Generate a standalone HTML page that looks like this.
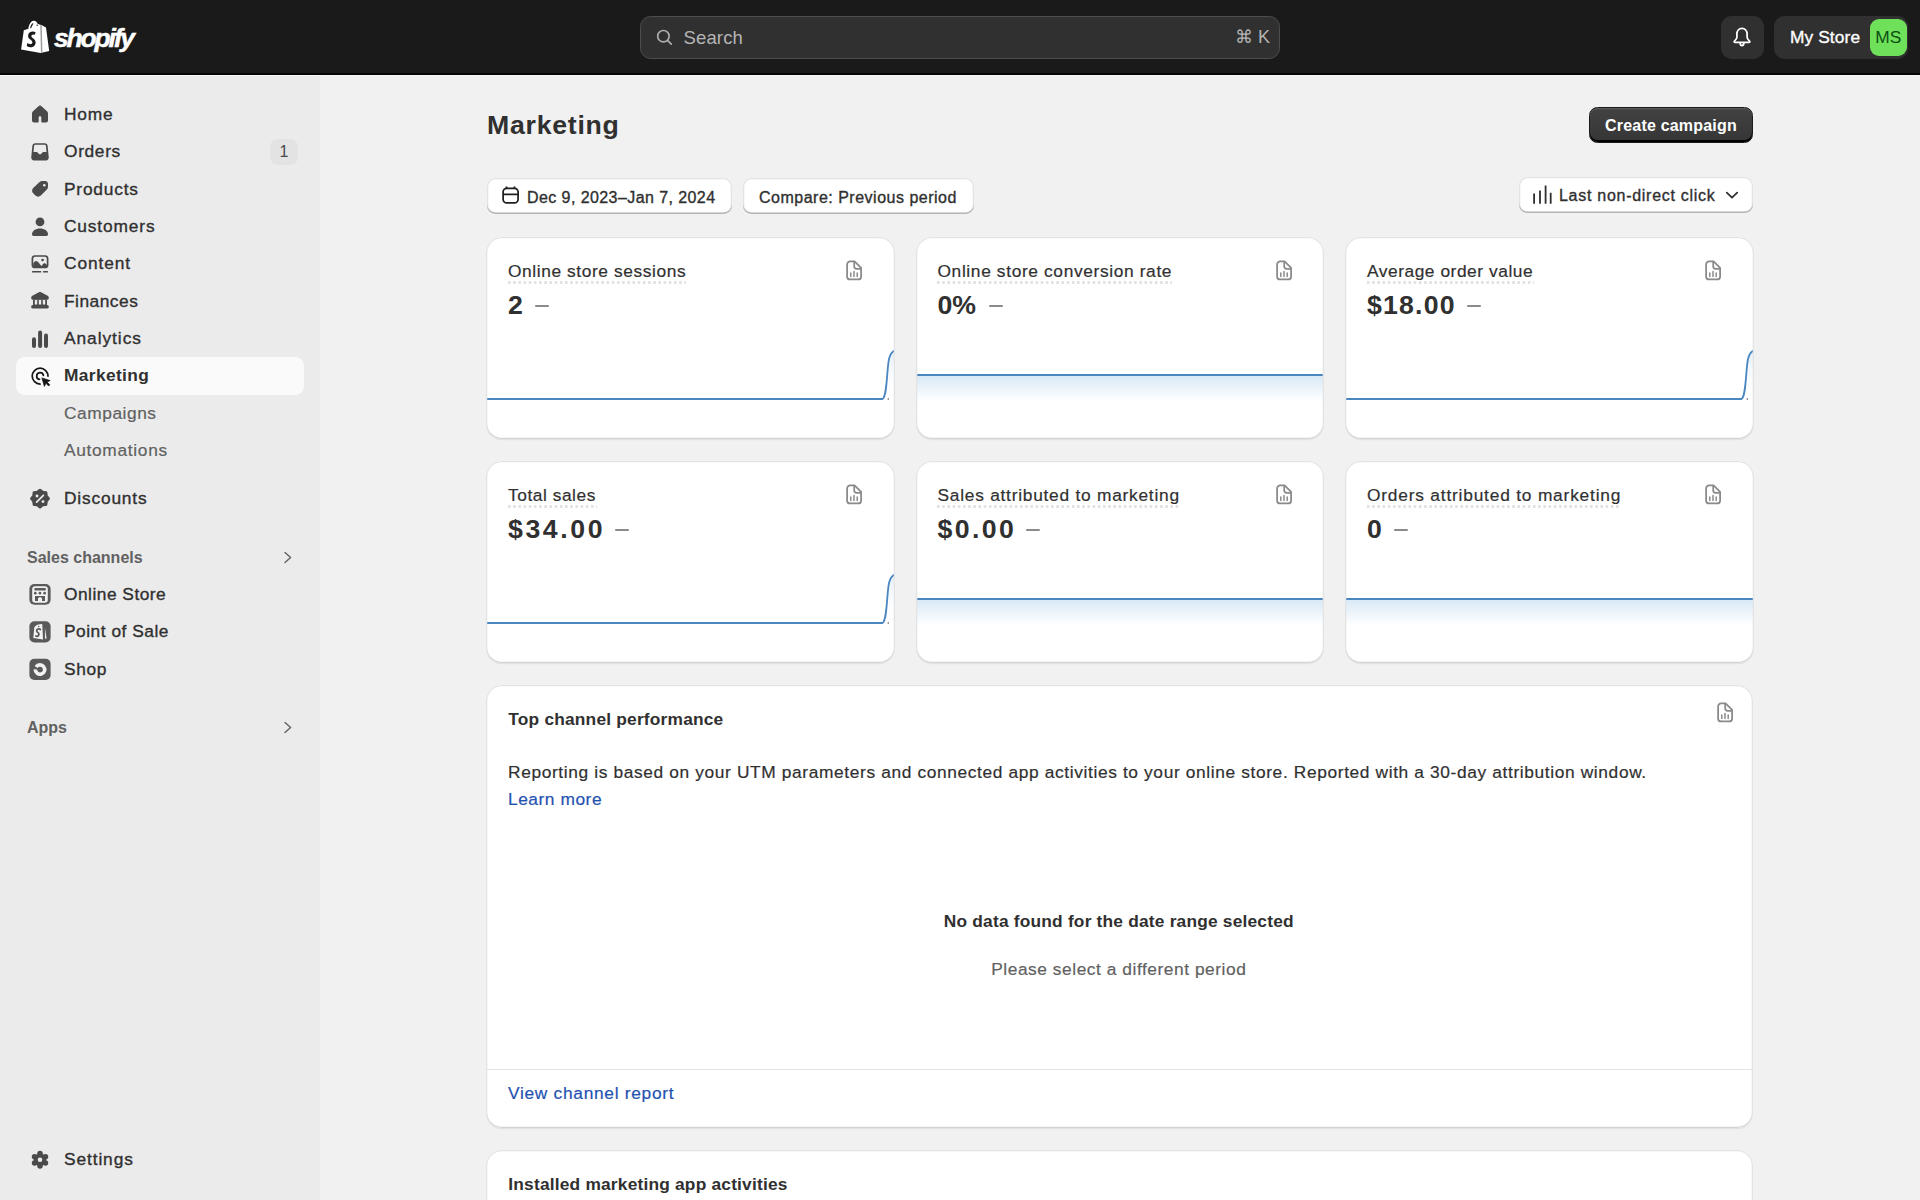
<!DOCTYPE html>
<html><head><meta charset="utf-8"><title>Marketing</title>
<style>
*{box-sizing:border-box;margin:0;padding:0}
html,body{width:1920px;height:1200px;overflow:hidden}
body{font-family:"Liberation Sans",sans-serif;background:#f1f1f1;color:#303030;position:relative;font-size:17.33px;-webkit-font-smoothing:antialiased}
.abs{position:absolute}
.t{position:absolute;white-space:nowrap;line-height:20px}
.r13{font-size:17.33px;letter-spacing:0.55px;-webkit-text-stroke:0.2px currentColor}
.m13{font-size:17.33px;letter-spacing:0.6px;-webkit-text-stroke:0.35px currentColor}
.b13{font-size:17.33px;font-weight:bold;letter-spacing:0.2px}
.m12{font-size:16px;letter-spacing:0.1px;-webkit-text-stroke:0.35px currentColor}
.card{position:absolute;background:#fff;border-radius:16px;overflow:hidden;box-shadow:0 1.3px 0 rgba(26,26,26,0.07)}
.card::after{content:"";position:absolute;inset:0;border-radius:16px;box-shadow:inset 0 -1.3px 0 #d4d4d4, inset 1.3px 0 0 #e3e3e3, inset -1.3px 0 0 #e3e3e3, inset 0 1.3px 0 #e3e3e3;pointer-events:none}
.btn{position:absolute;background:#fff;border-radius:8.5px;box-shadow:inset 0 -1.5px 0 #b5b5b5, inset 0 0 0 1.3px #e3e3e3}
.ul{position:absolute;height:2.5px;background-image:linear-gradient(90deg,#e2e2e2 50%,transparent 50%);background-size:5.2px 2.5px}
</style></head><body>
<div class="abs" style="left:0;top:0;width:1920px;height:75px;background:#1a1a1a;border-bottom:2px solid #060606"></div>
<div class="abs" style="left:0;top:75px;width:320px;height:1125px;background:#ebebeb"></div>
<div class="abs" style="left:0;top:75px;width:1920px;height:1px;background:#f8f8f8"></div>
<div class="abs" style="left:16px;top:357px;width:288.2px;height:38px;background:#fafafa;border-radius:8.5px"></div>
<div class="t m13" style="left:64px;top:104px;letter-spacing:0.77px">Home</div>
<div class="t m13" style="left:64px;top:141.3px;letter-spacing:0.66px">Orders</div>
<div class="t m13" style="left:64px;top:178.7px;letter-spacing:0.79px">Products</div>
<div class="t m13" style="left:64px;top:216px;letter-spacing:0.85px">Customers</div>
<div class="t m13" style="left:64px;top:253.3px;letter-spacing:0.90px">Content</div>
<div class="t m13" style="left:64px;top:290.7px;letter-spacing:0.50px">Finances</div>
<div class="t m13" style="left:64px;top:328px;letter-spacing:0.95px">Analytics</div>
<div class="t m13" style="left:64px;top:488px;letter-spacing:0.81px">Discounts</div>
<div class="t m13" style="left:64px;top:584px;letter-spacing:0.49px">Online Store</div>
<div class="t m13" style="left:64px;top:621.3px;letter-spacing:0.52px">Point of Sale</div>
<div class="t m13" style="left:64px;top:658.7px;letter-spacing:0.68px">Shop</div>
<div class="t m13" style="left:64px;top:1149px;letter-spacing:0.89px">Settings</div>
<div class="t b13" style="left:64px;top:365.3px;color:#303030;letter-spacing:0.36px">Marketing</div>
<div class="t r13" style="left:64px;top:402.7px;color:#616161;letter-spacing:0.54px">Campaigns</div>
<div class="t r13" style="left:64px;top:440px;color:#616161;letter-spacing:0.68px">Automations</div>
<div class="abs" style="left:270px;top:139px;width:28px;height:26px;background:#e3e3e3;border-radius:8px;font-size:16px;line-height:26px;text-align:center;color:#4a4a4a">1</div>
<div class="t" style="left:27px;top:547.5px;color:#616161;font-weight:bold;font-size:16px;letter-spacing:0px">Sales channels</div>
<div class="t" style="left:27px;top:717.5px;color:#616161;font-weight:bold;font-size:16px">Apps</div>
<svg class="abs" style="left:0;top:0" width="320" height="1200" viewBox="0 0 320 1200"><path fill="#4a4a4a" d="M40 105.6 C40.6 105.6 41.1 105.8 41.5 106.2 L47 111.2 C47.6 111.8 48 112.5 48 113.4 V120.4 C48 121.5 47.1 122.4 46 122.4 H42 C41.5 122.4 41.3 122 41.3 121.5 V117.6 C41.3 116.9 40.9 116.3 40.3 116.3 H39.7 C39.1 116.3 38.7 116.9 38.7 117.6 V121.5 C38.7 122 38.5 122.4 38 122.4 H34 C32.9 122.4 32 121.5 32 120.4 V113.4 C32 112.5 32.4 111.8 33 111.2 L38.5 106.2 C38.9 105.8 39.4 105.6 40 105.6 Z"/><path fill="#4a4a4a" fill-rule="evenodd" d="M35.2 143.2 H44.8 C46.4 143.2 47.4 144.2 47.6 145.6 L48.75 157.3 C48.9 159 47.7 160.5 46 160.5 H34 C32.3 160.5 31.1 159 31.25 157.3 L32.4 145.6 C32.6 144.2 33.6 143.2 35.2 143.2 Z M35.4 144.8 C34.7 144.8 34.2 145.2 34.1 145.9 L33.5 152.1 H36.7 C37.1 152.1 37.4 152.3 37.6 152.6 L38.6 153.7 C39.3 154.5 40.7 154.5 41.4 153.7 L42.4 152.6 C42.6 152.3 42.9 152.1 43.3 152.1 H46.5 L45.9 145.9 C45.8 145.2 45.3 144.8 44.6 144.8 Z"/><path fill="#4a4a4a" d="M42.2 181 H45.2 C46.8 181 48 182.2 48 183.8 V186.8 C48 187.8 47.6 188.7 46.9 189.4 L40.8 195.5 C39.3 197 36.9 197 35.4 195.5 L33.2 193.3 C31.7 191.8 31.7 189.4 33.2 187.9 L39.6 182.1 C40.3 181.4 41.2 181 42.2 181 Z"/><circle cx="44.3" cy="185.2" r="1.3" fill="#ebebeb"/><circle cx="40" cy="221.9" r="4.4" fill="#4a4a4a"/><path fill="#4a4a4a" d="M32 234.2 C32 230.8 35.6 228.4 40 228.4 C44.4 228.4 48 230.8 48 234.2 C48 235.2 47.3 235.9 46.3 235.9 H33.7 C32.7 235.9 32 235.2 32 234.2 Z"/><rect x="32.4" y="256" width="15.2" height="11.5" rx="2.6" fill="none" stroke="#4a4a4a" stroke-width="1.7"/><path fill="#4a4a4a" d="M33.2 263.6 C34 262.1 35 261 36.1 261 C37.1 261 37.9 261.7 38.7 262.8 L41 265.5 C41.3 265.9 41.8 265.9 42.1 265.5 C42.8 264.3 43.4 263.3 44.3 263.3 C45.3 263.3 46.1 264 46.9 264.8 V267.3 H33.2 Z"/><circle cx="42.6" cy="260" r="1.35" fill="#4a4a4a"/><rect x="32" y="270.9" width="9.3" height="1.6" rx="0.6" fill="#4a4a4a"/><rect x="43" y="270.9" width="5" height="1.6" rx="0.6" fill="#4a4a4a"/><path fill="#4a4a4a" d="M40 292 C40.4 292 40.8 292.1 41.1 292.3 L47.7 295.8 C48.4 296.2 48.8 296.9 48.8 297.7 V298 C48.8 298.9 48.1 299.7 47.2 299.7 H32.8 C31.9 299.7 31.2 298.9 31.2 298 V297.7 C31.2 296.9 31.6 296.2 32.3 295.8 L38.9 292.3 C39.2 292.1 39.6 292 40 292 Z"/><path fill="#4a4a4a" fill-rule="evenodd" d="M33 299.4 H47 V305.3 H33 Z M34.8 299.9 V304.6 H37.2 V299.9 Z M38.8 299.9 V304.6 H41.2 V299.9 Z M42.8 299.9 V304.6 H45.2 V299.9 Z"/><rect x="31.2" y="305" width="17.6" height="3.6" rx="1.6" fill="#4a4a4a"/><rect x="32" y="337.3" width="4" height="10.6" rx="2" fill="#4a4a4a"/><rect x="38.1" y="330.6" width="4" height="17.3" rx="2" fill="#4a4a4a"/><rect x="44" y="333.4" width="4" height="14.5" rx="2" fill="#4a4a4a"/><path d="M48 376.1 A7.9 7.9 0 1 0 40.1 384" fill="none" stroke="#161616" stroke-width="1.75" stroke-linecap="round"/><path d="M43.4 375.3 A3.4 3.4 0 1 0 39.5 379.4" fill="none" stroke="#161616" stroke-width="1.75" stroke-linecap="round"/><path d="M41.9 377.9 L50.2 380.6 L47.1 382.1 L49.8 384.8 L48.6 386 L45.9 383.3 L44.4 386.4 Z" fill="#161616" stroke="#161616" stroke-width="0.7" stroke-linejoin="round"/><path fill="#4a4a4a" stroke="#4a4a4a" stroke-width="2.6" stroke-linejoin="round" d="M40.00 490.00 L42.68 492.13 L46.08 492.52 L46.47 495.92 L48.60 498.60 L46.47 501.28 L46.08 504.68 L42.68 505.07 L40.00 507.20 L37.32 505.07 L33.92 504.68 L33.53 501.28 L31.40 498.60 L33.53 495.92 L33.92 492.52 L37.32 492.13 Z"/><circle cx="37" cy="496" r="1.45" fill="#ebebeb"/><circle cx="43" cy="501.6" r="1.45" fill="#ebebeb"/><path d="M36.6 502.2 L43.4 495.4" stroke="#ebebeb" stroke-width="1.7" stroke-linecap="round"/><rect x="29.4" y="584" width="21.2" height="20.75" rx="5" fill="#5a5a5a"/><rect x="32.2" y="586.3" width="15.6" height="16.5" rx="3" fill="#f2f2f2"/><rect x="34.4" y="588.1" width="11.4" height="2.4" rx="0.6" fill="#5a5a5a"/><ellipse cx="35.3" cy="593.2" rx="1.35" ry="1.35" fill="#5a5a5a"/><ellipse cx="39.95" cy="593.2" rx="1.35" ry="1.35" fill="#5a5a5a"/><ellipse cx="44.6" cy="593.2" rx="1.35" ry="1.35" fill="#5a5a5a"/><path fill="#5a5a5a" fill-rule="evenodd" d="M35 596.1 H45 V600.9 H35 Z M38 600.9 V598.9 C38 597.9 38.9 597.2 40 597.2 C41.1 597.2 42 597.9 42 598.9 V600.9 Z"/><rect x="29.4" y="621.3" width="21.2" height="21.2" rx="5" fill="#5a5a5a"/><path d="M34.2 628.3 C34.6 626 37.5 624.3 41.3 624.1 L42.3 624.3 L43 639.6 L33.3 637.9 Z" fill="#f2f2f2"/><path d="M44.9 627.8 L46.6 638.6 L45 638.8 Z" fill="#f2f2f2"/><circle cx="38.7" cy="626.4" r="0.75" fill="#5a5a5a"/><path d="M40.4 629.5 C39.6 628.8 38.3 628.7 37.4 629.3 C36.3 630.1 36.5 631.4 37.6 632.2 C38.9 633.1 39.3 634.3 38.5 635.4 C37.8 636.3 36.6 636.4 35.9 636" stroke="#5a5a5a" stroke-width="1.75" fill="none" stroke-linecap="round"/><rect x="29.4" y="658.8" width="21.2" height="21.2" rx="5" fill="#5a5a5a"/><path d="M36.1 666.9 A4.7 4.7 0 1 1 35.3 669.4" stroke="#f2f2f2" stroke-width="3.6" fill="none" stroke-linecap="butt"/><circle cx="40" cy="1159.8" r="6.4" fill="#4a4a4a"/><circle cx="40.00" cy="1166.10" r="2.75" fill="#4a4a4a"/><circle cx="34.54" cy="1162.95" r="2.75" fill="#4a4a4a"/><circle cx="34.54" cy="1156.65" r="2.75" fill="#4a4a4a"/><circle cx="40.00" cy="1153.50" r="2.75" fill="#4a4a4a"/><circle cx="45.46" cy="1156.65" r="2.75" fill="#4a4a4a"/><circle cx="45.46" cy="1162.95" r="2.75" fill="#4a4a4a"/><circle cx="40" cy="1159.8" r="2.3" fill="#ebebeb"/><path d="M285 552.6 L290.6 557.6 L285 562.6" stroke="#616161" stroke-width="1.4" fill="none" stroke-linecap="round" stroke-linejoin="round"/><path d="M285 722.6 L290.6 727.6 L285 732.6" stroke="#616161" stroke-width="1.4" fill="none" stroke-linecap="round" stroke-linejoin="round"/></svg>
<svg class="abs" style="left:0;top:0" width="60" height="60" viewBox="0 0 60 60">
 <path d="M23.8 30.2 L28.4 28.7 C28.8 25 30.8 21 33.6 20.8 C35.6 20.7 36.8 22 37.6 23.8 L40.2 24.8 L42 25.3 L46 27.6 L49.2 51 L40.6 52.9 L21.1 49.6 Z" fill="#fff"/>
 <path d="M30 28.3 C30.4 26.1 31.4 23.9 32.7 23.3 L33.7 23.8 C32.6 24.7 31.7 26.6 31.3 28 Z" fill="#1a1a1a"/>
 <circle cx="37.2" cy="25.2" r="0.75" fill="#1a1a1a"/>
 <path d="M41 25.2 L41.7 52.7" stroke="#9d9d9d" stroke-width="1.5" fill="none"/>
 <g transform="translate(26.75 31.4) scale(1.03 1.1) translate(-8.4 -12.9)"><path d="M16.9 13.6 C16 13.1 14.9 12.9 13.8 13 C11 13.2 9.4 15.2 9.7 17.5 C10.1 20.2 13.9 20.6 13.9 22.8 C13.9 23.9 12.9 24.7 11.7 24.5 C10.4 24.3 9 23.5 9 23.5 L8.4 26.2 C8.4 26.2 9.8 27.3 12 27.4 C15.2 27.5 17.2 25.3 17 22.6 C16.7 19.4 12.9 18.9 12.9 17.3 C12.9 16.5 13.6 15.7 15 15.7 C16 15.7 16.4 16 16.4 16 Z" fill="#1a1a1a"/></g>
</svg>
<div class="t" style="left:54px;top:20.8px;font-size:26.5px;line-height:34px;font-weight:bold;font-style:italic;color:#fff;letter-spacing:-2.2px;-webkit-text-stroke:0.5px #fff;transform-origin:0 0">shopify</div>
<div class="abs" style="left:640px;top:16px;width:640px;height:42.5px;background:#303030;border:1.3px solid #4d4d4d;border-radius:10.67px"></div>
<svg class="abs" style="left:654px;top:27px" width="20" height="20" viewBox="0 0 20 20"><circle cx="9.4" cy="9.2" r="5.7" stroke="#acacac" stroke-width="1.7" fill="none"/><path d="M13.5 13.4 L17.3 17.2" stroke="#acacac" stroke-width="1.7" stroke-linecap="round"/></svg>
<div class="t" style="left:683.5px;top:27.5px;font-size:18.5px;letter-spacing:0.15px;color:#b5b5b5">Search</div>
<div class="t" style="left:1235px;top:27px;font-size:18px;color:#b5b5b5">&#8984; K</div>
<div class="abs" style="left:1721px;top:16px;width:42.5px;height:42.5px;background:#303030;border-radius:10.67px"></div>
<svg class="abs" style="left:1730px;top:25px" width="24" height="24" viewBox="0 0 24 24"><path d="M12 3.4 C8.9 3.4 6.9 5.9 6.9 9 V12.3 C6.9 13.6 6.2 14.6 4.9 15.6 C3.7 16.5 4.1 17.4 5.2 17.4 H18.8 C19.9 17.4 20.3 16.5 19.1 15.6 C17.8 14.6 17.1 13.6 17.1 12.3 V9 C17.1 5.9 15.1 3.4 12 3.4 Z" stroke="#fff" stroke-width="1.75" fill="none" stroke-linejoin="round"/><path d="M10.1 17.6 C10.1 19 10.9 20.6 12 20.6 C13.1 20.6 13.9 19 13.9 17.6" stroke="#fff" stroke-width="1.75" fill="none"/></svg>
<div class="abs" style="left:1774px;top:16px;width:134px;height:42.5px;background:#303030;border-radius:10.67px"></div>
<div class="t m13" style="left:1790px;top:27px;color:#fff;letter-spacing:0.1px">My Store</div>
<div class="abs" style="left:1869.5px;top:18.5px;width:37.5px;height:37.7px;background:#6fe05a;border-radius:9px;color:#0b4f12;font-size:17.33px;line-height:37.7px;text-align:center">MS</div>
<div class="t" style="left:487px;top:110px;font-size:26.67px;line-height:30px;font-weight:bold;letter-spacing:0.75px">Marketing</div>
<div class="abs" style="left:1588.7px;top:106.7px;width:164.5px;height:36.6px;background:linear-gradient(#424242,#363636);border:1.3px solid #1c1c1c;border-radius:8.5px;box-shadow:inset 0 -2px 0 #000, inset 0 1.3px 0 rgba(255,255,255,0.12)"></div>
<div class="t" style="left:1605px;top:116px;color:#fff;font-weight:bold;font-size:16px;letter-spacing:0.2px">Create campaign</div>
<div class="btn" style="left:487px;top:177.8px;width:244.5px;height:36.5px"></div>
<svg class="abs" style="left:499px;top:184px" width="24" height="24" viewBox="0 0 24 24"><rect x="4.1" y="4.4" width="15" height="14.5" rx="3.7" stroke="#1f1f1f" stroke-width="1.75" fill="none"/><path d="M4.1 10.25 H19.1 M7.5 2.4 V5 M15.5 2.4 V5" stroke="#1f1f1f" stroke-width="1.75"/></svg>
<div class="t m12" style="left:527px;top:187.5px;letter-spacing:0.42px">Dec 9, 2023&ndash;Jan 7, 2024</div>
<div class="btn" style="left:743px;top:177.8px;width:230.5px;height:36.5px"></div>
<div class="t m12" style="left:759px;top:187.5px;letter-spacing:0.5px">Compare: Previous period</div>
<div class="btn" style="left:1518.7px;top:176.8px;width:234.3px;height:35.8px"></div>
<svg class="abs" style="left:1530px;top:183px" width="24" height="24" viewBox="0 0 24 24"><path d="M4.1 20.75 V10.5 M10 20.75 V7.6 M15.6 20.75 V2.5 M20.7 20.75 V9.8" stroke="#303030" stroke-width="1.8"/></svg>
<div class="t m12" style="left:1559px;top:186px;letter-spacing:0.72px">Last non-direct click</div>
<svg class="abs" style="left:1723px;top:186px" width="18" height="18" viewBox="0 0 18 18"><path d="M3.8 6.6 L9 11.6 L14.2 6.6" stroke="#303030" stroke-width="1.8" fill="none" stroke-linecap="round" stroke-linejoin="round"/></svg>
<div class="card" style="left:486.3px;top:236.7px;width:408.4px;height:202.5px"><div class="abs" style="left:0.7px;top:0.8px;width:407px;height:201px"><svg class="abs" style="left:-1px;top:0" width="409" height="201" viewBox="-1 0 409 201"><defs><linearGradient id="g1" x1="0" y1="0" x2="0" y2="1"><stop offset="0" stop-color="#cfe3f5"/><stop offset="1" stop-color="#fff" stop-opacity="0"/></linearGradient></defs><path d="M395.5 162.0 C398.5 160.5 399.3 150 400.3 137 C401.3 124 402 116 407.5 113.6 V162.0 Z" fill="url(#g1)" opacity="0.6"/><path d="M-1 162.0 H395.5 C398.5 160.5 399.3 150 400.3 137 C401.3 124 402 116 407.5 113.6" stroke="#4a86c0" stroke-width="1.8" fill="none"/><circle cx="401.3" cy="162.0" r="0.8" fill="#555"/></svg><div class="t r13" style="left:21px;top:23.5px;letter-spacing:0.6px">Online store sessions</div><div class="ul" style="left:21px;top:44px;width:178px"></div><div class="t" style="left:21px;top:52.5px;display:flex;align-items:flex-start"><span style="font-size:26.67px;line-height:30px;font-weight:bold;letter-spacing:0px;margin-right:-0px">2</span><span style="display:block;width:14px;height:2.3px;background:#8a8a8a;border-radius:1px;margin-left:12.5px;margin-top:14.8px"></span></div><svg class="abs" style="left:358.5px;top:22px" width="18" height="22" viewBox="0 0 18 22"><path d="M5.1 2.4 H9.6 L16.1 8.9 V17.4 C16.1 19.1 14.8 20.4 13.1 20.4 H5.1 C3.4 20.4 2.1 19.1 2.1 17.4 V5.4 C2.1 3.7 3.4 2.4 5.1 2.4 Z" stroke="#8a8a8a" stroke-width="1.75" fill="none" stroke-linejoin="round"/><path d="M9.2 2.8 V7.3 C9.2 8.7 10.3 9.8 11.7 9.8 H15.8" stroke="#8a8a8a" stroke-width="1.75" fill="none"/><path d="M5.8 17.4 V14 M9 17.4 V12.6 M12.2 17.4 V14" stroke="#8a8a8a" stroke-width="1.5" stroke-linecap="round"/></svg></div></div>
<div class="card" style="left:915.8px;top:236.7px;width:408.4px;height:202.5px"><div class="abs" style="left:0.7px;top:0.8px;width:407px;height:201px"><div class="abs" style="left:-2px;top:136.7px;width:412px;height:2px;background:#4a86c0"></div><div class="abs" style="left:-2px;top:138.7px;width:412px;height:25px;background:linear-gradient(#d9e9f6,rgba(255,255,255,0))"></div><div class="t r13" style="left:21px;top:23.5px;letter-spacing:0.64px">Online store conversion rate</div><div class="ul" style="left:21px;top:44px;width:235px"></div><div class="t" style="left:21px;top:52.5px;display:flex;align-items:flex-start"><span style="font-size:26.67px;line-height:30px;font-weight:bold;letter-spacing:0px;margin-right:-0px">0%</span><span style="display:block;width:14px;height:2.3px;background:#8a8a8a;border-radius:1px;margin-left:12.5px;margin-top:14.8px"></span></div><svg class="abs" style="left:358.5px;top:22px" width="18" height="22" viewBox="0 0 18 22"><path d="M5.1 2.4 H9.6 L16.1 8.9 V17.4 C16.1 19.1 14.8 20.4 13.1 20.4 H5.1 C3.4 20.4 2.1 19.1 2.1 17.4 V5.4 C2.1 3.7 3.4 2.4 5.1 2.4 Z" stroke="#8a8a8a" stroke-width="1.75" fill="none" stroke-linejoin="round"/><path d="M9.2 2.8 V7.3 C9.2 8.7 10.3 9.8 11.7 9.8 H15.8" stroke="#8a8a8a" stroke-width="1.75" fill="none"/><path d="M5.8 17.4 V14 M9 17.4 V12.6 M12.2 17.4 V14" stroke="#8a8a8a" stroke-width="1.5" stroke-linecap="round"/></svg></div></div>
<div class="card" style="left:1345.3px;top:236.7px;width:408.4px;height:202.5px"><div class="abs" style="left:0.7px;top:0.8px;width:407px;height:201px"><svg class="abs" style="left:-1px;top:0" width="409" height="201" viewBox="-1 0 409 201"><defs><linearGradient id="g1" x1="0" y1="0" x2="0" y2="1"><stop offset="0" stop-color="#cfe3f5"/><stop offset="1" stop-color="#fff" stop-opacity="0"/></linearGradient></defs><path d="M395.5 162.0 C398.5 160.5 399.3 150 400.3 137 C401.3 124 402 116 407.5 113.6 V162.0 Z" fill="url(#g1)" opacity="0.6"/><path d="M-1 162.0 H395.5 C398.5 160.5 399.3 150 400.3 137 C401.3 124 402 116 407.5 113.6" stroke="#4a86c0" stroke-width="1.8" fill="none"/><circle cx="401.3" cy="162.0" r="0.8" fill="#555"/></svg><div class="t r13" style="left:21px;top:23.5px;letter-spacing:0.55px">Average order value</div><div class="ul" style="left:21px;top:44px;width:167px"></div><div class="t" style="left:21px;top:52.5px;display:flex;align-items:flex-start"><span style="font-size:26.67px;line-height:30px;font-weight:bold;letter-spacing:1.2px;margin-right:-1.2px">$18.00</span><span style="display:block;width:14px;height:2.3px;background:#8a8a8a;border-radius:1px;margin-left:12.5px;margin-top:14.8px"></span></div><svg class="abs" style="left:358.5px;top:22px" width="18" height="22" viewBox="0 0 18 22"><path d="M5.1 2.4 H9.6 L16.1 8.9 V17.4 C16.1 19.1 14.8 20.4 13.1 20.4 H5.1 C3.4 20.4 2.1 19.1 2.1 17.4 V5.4 C2.1 3.7 3.4 2.4 5.1 2.4 Z" stroke="#8a8a8a" stroke-width="1.75" fill="none" stroke-linejoin="round"/><path d="M9.2 2.8 V7.3 C9.2 8.7 10.3 9.8 11.7 9.8 H15.8" stroke="#8a8a8a" stroke-width="1.75" fill="none"/><path d="M5.8 17.4 V14 M9 17.4 V12.6 M12.2 17.4 V14" stroke="#8a8a8a" stroke-width="1.5" stroke-linecap="round"/></svg></div></div>
<div class="card" style="left:486.3px;top:460.7px;width:408.4px;height:202.5px"><div class="abs" style="left:0.7px;top:0.8px;width:407px;height:201px"><svg class="abs" style="left:-1px;top:0" width="409" height="201" viewBox="-1 0 409 201"><defs><linearGradient id="g1" x1="0" y1="0" x2="0" y2="1"><stop offset="0" stop-color="#cfe3f5"/><stop offset="1" stop-color="#fff" stop-opacity="0"/></linearGradient></defs><path d="M395.5 162.0 C398.5 160.5 399.3 150 400.3 137 C401.3 124 402 116 407.5 113.6 V162.0 Z" fill="url(#g1)" opacity="0.6"/><path d="M-1 162.0 H395.5 C398.5 160.5 399.3 150 400.3 137 C401.3 124 402 116 407.5 113.6" stroke="#4a86c0" stroke-width="1.8" fill="none"/><circle cx="401.3" cy="162.0" r="0.8" fill="#555"/></svg><div class="t r13" style="left:21px;top:23.5px;letter-spacing:0.55px">Total sales</div><div class="ul" style="left:21px;top:44px;width:89px"></div><div class="t" style="left:21px;top:52.5px;display:flex;align-items:flex-start"><span style="font-size:26.67px;line-height:30px;font-weight:bold;letter-spacing:2.6px;margin-right:-2.6px">$34.00</span><span style="display:block;width:14px;height:2.3px;background:#8a8a8a;border-radius:1px;margin-left:12.5px;margin-top:14.8px"></span></div><svg class="abs" style="left:358.5px;top:22px" width="18" height="22" viewBox="0 0 18 22"><path d="M5.1 2.4 H9.6 L16.1 8.9 V17.4 C16.1 19.1 14.8 20.4 13.1 20.4 H5.1 C3.4 20.4 2.1 19.1 2.1 17.4 V5.4 C2.1 3.7 3.4 2.4 5.1 2.4 Z" stroke="#8a8a8a" stroke-width="1.75" fill="none" stroke-linejoin="round"/><path d="M9.2 2.8 V7.3 C9.2 8.7 10.3 9.8 11.7 9.8 H15.8" stroke="#8a8a8a" stroke-width="1.75" fill="none"/><path d="M5.8 17.4 V14 M9 17.4 V12.6 M12.2 17.4 V14" stroke="#8a8a8a" stroke-width="1.5" stroke-linecap="round"/></svg></div></div>
<div class="card" style="left:915.8px;top:460.7px;width:408.4px;height:202.5px"><div class="abs" style="left:0.7px;top:0.8px;width:407px;height:201px"><div class="abs" style="left:-2px;top:136.7px;width:412px;height:2px;background:#4a86c0"></div><div class="abs" style="left:-2px;top:138.7px;width:412px;height:25px;background:linear-gradient(#d9e9f6,rgba(255,255,255,0))"></div><div class="t r13" style="left:21px;top:23.5px;letter-spacing:0.75px">Sales attributed to marketing</div><div class="ul" style="left:21px;top:44px;width:242px"></div><div class="t" style="left:21px;top:52.5px;display:flex;align-items:flex-start"><span style="font-size:26.67px;line-height:30px;font-weight:bold;letter-spacing:2.4px;margin-right:-2.4px">$0.00</span><span style="display:block;width:14px;height:2.3px;background:#8a8a8a;border-radius:1px;margin-left:12.5px;margin-top:14.8px"></span></div><svg class="abs" style="left:358.5px;top:22px" width="18" height="22" viewBox="0 0 18 22"><path d="M5.1 2.4 H9.6 L16.1 8.9 V17.4 C16.1 19.1 14.8 20.4 13.1 20.4 H5.1 C3.4 20.4 2.1 19.1 2.1 17.4 V5.4 C2.1 3.7 3.4 2.4 5.1 2.4 Z" stroke="#8a8a8a" stroke-width="1.75" fill="none" stroke-linejoin="round"/><path d="M9.2 2.8 V7.3 C9.2 8.7 10.3 9.8 11.7 9.8 H15.8" stroke="#8a8a8a" stroke-width="1.75" fill="none"/><path d="M5.8 17.4 V14 M9 17.4 V12.6 M12.2 17.4 V14" stroke="#8a8a8a" stroke-width="1.5" stroke-linecap="round"/></svg></div></div>
<div class="card" style="left:1345.3px;top:460.7px;width:408.4px;height:202.5px"><div class="abs" style="left:0.7px;top:0.8px;width:407px;height:201px"><div class="abs" style="left:-2px;top:136.7px;width:412px;height:2px;background:#4a86c0"></div><div class="abs" style="left:-2px;top:138.7px;width:412px;height:25px;background:linear-gradient(#d9e9f6,rgba(255,255,255,0))"></div><div class="t r13" style="left:21px;top:23.5px;letter-spacing:0.8px">Orders attributed to marketing</div><div class="ul" style="left:21px;top:44px;width:254px"></div><div class="t" style="left:21px;top:52.5px;display:flex;align-items:flex-start"><span style="font-size:26.67px;line-height:30px;font-weight:bold;letter-spacing:3.5px;margin-right:-3.5px">0</span><span style="display:block;width:14px;height:2.3px;background:#8a8a8a;border-radius:1px;margin-left:12.5px;margin-top:14.8px"></span></div><svg class="abs" style="left:358.5px;top:22px" width="18" height="22" viewBox="0 0 18 22"><path d="M5.1 2.4 H9.6 L16.1 8.9 V17.4 C16.1 19.1 14.8 20.4 13.1 20.4 H5.1 C3.4 20.4 2.1 19.1 2.1 17.4 V5.4 C2.1 3.7 3.4 2.4 5.1 2.4 Z" stroke="#8a8a8a" stroke-width="1.75" fill="none" stroke-linejoin="round"/><path d="M9.2 2.8 V7.3 C9.2 8.7 10.3 9.8 11.7 9.8 H15.8" stroke="#8a8a8a" stroke-width="1.75" fill="none"/><path d="M5.8 17.4 V14 M9 17.4 V12.6 M12.2 17.4 V14" stroke="#8a8a8a" stroke-width="1.5" stroke-linecap="round"/></svg></div></div>
<div class="card" style="left:486.3px;top:685px;width:1266.6px;height:443.3px">
 <div class="t b13" style="left:22px;top:24px">Top channel performance</div>
 <svg class="abs" style="left:1230px;top:15.5px" width="18" height="22" viewBox="0 0 18 22"><path d="M5.1 2.4 H9.6 L16.1 8.9 V17.4 C16.1 19.1 14.8 20.4 13.1 20.4 H5.1 C3.4 20.4 2.1 19.1 2.1 17.4 V5.4 C2.1 3.7 3.4 2.4 5.1 2.4 Z" stroke="#8a8a8a" stroke-width="1.75" fill="none" stroke-linejoin="round"/><path d="M9.2 2.8 V7.3 C9.2 8.7 10.3 9.8 11.7 9.8 H15.8" stroke="#8a8a8a" stroke-width="1.75" fill="none"/><path d="M5.8 17.4 V14 M9 17.4 V12.6 M12.2 17.4 V14" stroke="#8a8a8a" stroke-width="1.5" stroke-linecap="round"/></svg>
 <div class="abs r13" style="left:21.7px;top:74px;line-height:26.67px;white-space:nowrap;letter-spacing:0.63px">Reporting is based on your UTM parameters and connected app activities to your online store. Reported with a 30-day attribution window.<br><span style="color:#2352b0;letter-spacing:0.55px">Learn more</span></div>
 <div class="t b13" style="left:0;width:1265px;top:225.5px;text-align:center">No data found for the date range selected</div>
 <div class="t r13" style="left:0;width:1265px;top:273.5px;text-align:center;color:#616161">Please select a different period</div>
 <div class="abs" style="left:0;top:384px;width:1267px;height:1.3px;background:#e3e3e3"></div>
 <div class="t r13" style="left:21.7px;top:398px;color:#2352b0;letter-spacing:0.71px">View channel report</div>
</div>
<div class="card" style="left:486.3px;top:1150px;width:1266.6px;height:120px">
 <div class="t b13" style="left:22px;top:23.7px">Installed marketing app activities</div>
</div>
</body></html>
